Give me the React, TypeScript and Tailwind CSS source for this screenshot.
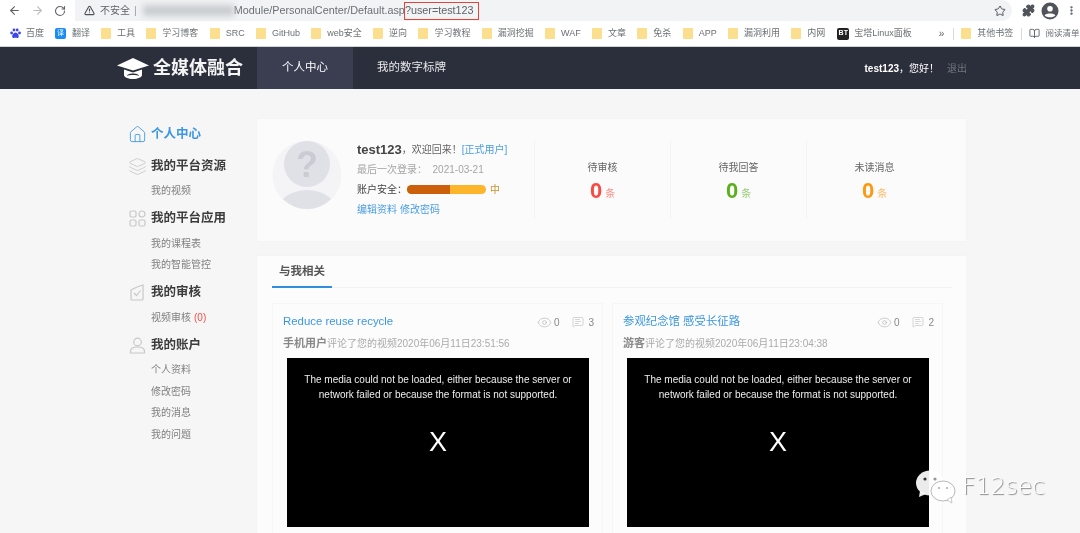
import { ArrowLeft, ArrowRight, RotateCw, TriangleAlert, Star, Puzzle, EllipsisVertical, Home, Layers, Eye, MessageSquareText, BookOpen } from 'lucide-react';

const font = "font-['Liberation_Sans','Noto_Sans_CJK_SC',sans-serif]";

const leftMarks = ['工具', '学习博客', 'SRC', 'GitHub', 'web安全', '逆向', '学习教程', '漏洞挖掘', 'WAF', '文章', '免杀', 'APP', '漏洞利用', '内网'];

function GridIcon() {
  return (
    <svg width="17" height="17" viewBox="0 0 17 17" fill="none" stroke="#c8c8c8" strokeWidth="1.2">
      <rect x="1" y="1" width="6" height="6" rx="1.5" />
      <circle cx="13" cy="4" r="3" />
      <rect x="1" y="10" width="6" height="6" rx="1.5" />
      <rect x="10" y="10" width="6" height="6" rx="1.5" />
    </svg>
  );
}

function ReviewIcon() {
  return (
    <svg width="17" height="17" viewBox="0 0 17 17" fill="none" stroke="#c8c8c8" strokeWidth="1.2">
      <path d="M2 6 L8 3 L14 1 V15 a1 1 0 0 1 -1 1 H3 a1 1 0 0 1 -1 -1 Z" />
      <path d="M5 9 L7.5 11.5 L11.5 6.5" />
    </svg>
  );
}

function AccountIcon() {
  return (
    <svg width="17" height="17" viewBox="0 0 17 17" fill="none" stroke="#c8c8c8" strokeWidth="1.2">
      <circle cx="8.5" cy="5" r="3.8" />
      <path d="M1.5 16 V14.5 C1.5 11.5 4.5 10 8.5 10 C12.5 10 15.5 11.5 15.5 14.5 V16 Z" />
    </svg>
  );
}

function LayersIcon() {
  return <Layers size={19} strokeWidth={1.1} className="-mx-[1px] text-[#c8c8c8]" />;
}

const sideMenu = [
  { title: '我的平台资源', icon: <LayersIcon />, items: ['我的视频'] },
  { title: '我的平台应用', icon: <GridIcon />, items: ['我的课程表', '我的智能管控'] },
  { title: '我的审核', icon: <ReviewIcon />, items: ['视频审核'] },
  { title: '我的账户', icon: <AccountIcon />, items: ['个人资料', '修改密码', '我的消息', '我的问题'] },
];

const stats = [
  { label: '待审核', color: 'text-[#f74c45]', unit: 'text-[#f98f8a]' },
  { label: '待我回答', color: 'text-[#5cb01e]', unit: 'text-[#9acb75]' },
  { label: '未读消息', color: 'text-[#fb9a12]', unit: 'text-[#fbbd6c]' },
];

const feed = [
  { title: 'Reduce reuse recycle', who: '手机用户', time: '2020年06月11日23:51:56', comments: 3 },
  { title: '参观纪念馆 感受长征路', who: '游客', time: '2020年06月11日23:04:38', comments: 2 },
];

function Folder() {
  return <span className="h-[11px] w-[10px] shrink-0 rounded-[1px] bg-[#fbdf8e]" />;
}

function Mark({ label }: { label: string }) {
  return (
    <div className="flex shrink-0 items-center gap-[6px]">
      <Folder />
      <span className="text-[9px] whitespace-nowrap text-[#6b6f74]">{label}</span>
    </div>
  );
}

function Paw() {
  return (
    <svg width="11" height="11" viewBox="0 0 11 11" fill="#3d46e8" className="shrink-0">
      <circle cx="1.6" cy="5" r="1.4" />
      <circle cx="4" cy="2" r="1.4" />
      <circle cx="7.2" cy="2" r="1.4" />
      <circle cx="9.5" cy="5" r="1.4" />
      <path d="M5.5 4.5 C7.5 4.5 9.5 7.5 8.5 9.5 C7.5 10.5 6.5 9.8 5.5 9.8 C4.5 9.8 3.5 10.5 2.5 9.5 C1.5 7.5 3.5 4.5 5.5 4.5 Z" />
    </svg>
  );
}

function Profile16() {
  return (
    <svg width="18" height="18" viewBox="0 0 18 18" className="shrink-0">
      <circle cx="9" cy="9" r="8.5" fill="#50545a" />
      <circle cx="9" cy="6.8" r="2.8" fill="#fff" />
      <path d="M3.6 13.2 C5 10.8 13 10.8 14.4 13.2 C12.5 16 5.5 16 3.6 13.2 Z" fill="#fff" />
    </svg>
  );
}

function BrowserBar() {
  return (
    <div className="bg-white">
      <div className="flex h-[21px] items-center">
        <div className="flex w-[75px] items-center gap-[10px] pl-[8px] text-[#5f6368]">
          <ArrowLeft size={13} strokeWidth={2} />
          <ArrowRight size={13} strokeWidth={2} className="text-[#b9bcc0]" />
          <RotateCw size={12} strokeWidth={2.2} />
        </div>
        <div className="flex h-[21px] w-[937px] items-center rounded-r-full bg-[#f1f3f4] pl-[9px] text-[10.8px] text-[#5f6368]">
          <TriangleAlert size={11} strokeWidth={2.4} className="mr-[5px] text-[#50545a]" />
          <span className="text-[10px]">不安全</span>
          <span className="ml-[4px] text-[#9aa0a6]">|</span>
          <span className="ml-[6px] h-[11px] w-[91px] bg-[#c9cccf] blur-[3px]" />
          <span className="-mr-[1px] text-[#6b6f74]">Module/PersonalCenter/Default.asp</span>
          <span className="flex h-[18px] items-center border-[1.5px] border-[#e8403a] pr-[4px] text-[#5f6368]">
            ?user=test123
          </span>
          <Star size={12} strokeWidth={2} className="mr-[6px] ml-auto text-[#50545a]" />
        </div>
        <div className="flex flex-1 items-center gap-[6px] pl-[10px] text-[#50545a]">
          <Puzzle size={13} fill="currentColor" />
          <Profile16 />
          <EllipsisVertical size={11} strokeWidth={3} className="ml-[1px]" />
        </div>
      </div>
      <div className="flex h-[26px] items-center overflow-hidden border-b border-[#d2d3d5] pl-[10px]">
        <div className="flex shrink-0 items-center gap-[5px]">
          <Paw />
          <span className="text-[9px] whitespace-nowrap text-[#6b6f74]">百度</span>
        </div>
        <div className="ml-[11px] flex shrink-0 items-center gap-[6px]">
          <span className="flex h-[11px] w-[11px] items-center justify-center rounded-[2px] bg-[#1a8cf5] text-[7px] text-white">译</span>
          <span className="text-[9px] whitespace-nowrap text-[#6b6f74]">翻译</span>
        </div>
        <div className="ml-[11px] flex shrink-0 gap-[11.3px]">
          {leftMarks.map((m) => (
            <Mark key={m} label={m} />
          ))}
        </div>
        <div className="ml-[12px] flex shrink-0 items-center gap-[5px]">
          <span className="flex h-[12px] w-[12px] items-center justify-center rounded-[2px] bg-[#222] text-[7px] font-bold text-white">BT</span>
          <span className="text-[9px] whitespace-nowrap text-[#6b6f74]">宝塔Linux面板</span>
        </div>
        <span className="ml-[27px] shrink-0 text-[10px] text-[#5f6368]">»</span>
        <span className="ml-[9px] h-[12px] w-px shrink-0 bg-[#d8d9db]" />
        <div className="ml-[7px]">
          <Mark label="其他书签" />
        </div>
        <span className="ml-[8px] h-[12px] w-px shrink-0 bg-[#d8d9db]" />
        <div className="ml-[7px] flex shrink-0 items-center gap-[5px]">
          <BookOpen size={11} className="text-[#5f6368]" />
          <span className="text-[8.5px] whitespace-nowrap text-[#6b6f74]">阅读清单</span>
        </div>
      </div>
    </div>
  );
}

function LogoCap() {
  return (
    <svg width="32" height="21" viewBox="0 0 32 21" fill="#fff" className="shrink-0">
      <path d="M16 0 L32 7.5 L16 12.5 L0 7.5 Z" />
      <path d="M7 11.5 L16 14.5 L25 11.5 V17 C25 19 21 21 16 21 C11 21 7 19 7 17 Z" />
      <path d="M10 18 C10 14.5 22 14.5 22 18 C20 16.8 12 16.8 10 18 Z" fill="#2b2f3b" />
    </svg>
  );
}

function TopNav() {
  return (
    <div className="flex h-[42px] items-stretch bg-[#2b2f3b] pl-[117px]">
      <div className="flex w-[140px] items-center gap-[4px]">
        <LogoCap />
        <span className="text-[18px] leading-none font-bold whitespace-nowrap text-[#f4f4f4]">全媒体融合</span>
      </div>
      <div className="flex w-[96px] items-center justify-center bg-[#3a3e50] text-[11.5px] text-white">个人中心</div>
      <div className="ml-[24px] flex items-center text-[11.5px] text-[#e8e8ea]">我的数字标牌</div>
      <div className="ml-auto flex items-center pr-[113px] text-[10px] text-white">
        <span className="font-bold">test123</span>
        <span>，您好！</span>
        <span className="ml-[8px] text-[#70737c]">退出</span>
      </div>
    </div>
  );
}

function Sidebar() {
  return (
    <div className="w-[128px] shrink-0 pt-[1px] pl-[1px]">
      <div className="flex h-[29px] items-center gap-[4px]">
        <Home size={19} strokeWidth={1.1} className="-ml-[1px] text-[#3b97e3]" />
        <span className="text-[12.5px] font-bold text-[#3b97e3]">个人中心</span>
      </div>
      {sideMenu.map((s) => (
        <div key={s.title} className="mt-[7px]">
          <div className="flex h-[20px] items-center gap-[5px]">
            {s.icon}
            <span className="text-[12.5px] font-bold whitespace-nowrap text-[#3c3c3c]">{s.title}</span>
          </div>
          <div className="mt-[4px] pl-[22px]">
            {s.items.map((i) => (
              <div key={i} className="flex h-[21.5px] items-center text-[10px] text-[#808080]">
                {i}
                {i === '视频审核' && <span className="ml-[3px] text-[#f74c45]">(0)</span>}
              </div>
            ))}
          </div>
        </div>
      ))}
    </div>
  );
}

function Avatar() {
  return (
    <svg width="70" height="70" viewBox="0 0 70 70" className="shrink-0">
      <defs>
        <clipPath id="round">
          <circle cx="35" cy="35" r="34" />
        </clipPath>
      </defs>
      <circle cx="35" cy="35" r="34.5" fill="#f4f4f6" />
      <circle cx="35" cy="24" r="23" fill="#e0e1e7" />
      <ellipse cx="35" cy="72" rx="30" ry="22" fill="#e0e1e7" clipPath="url(#round)" />
      <text x="35" y="37" textAnchor="middle" fontSize="36" fontWeight="700" fill="#cbccd3" fontFamily="Liberation Sans">?</text>
    </svg>
  );
}

function Profile() {
  return (
    <div className="flex h-[122px] items-start bg-[#fbfbfb] pt-[21px] pl-[15px] outline outline-[#f4f4f4]">
      <Avatar />
      <div className="ml-[15px] w-[177px] shrink-0">
        <div className="flex h-[19px] items-center text-[10px] whitespace-nowrap text-[#666]">
          <span className="text-[13px] font-bold text-[#444]">test123</span>
          <span>，欢迎回来！</span>
          <span className="text-[#4a9de5]">[正式用户]</span>
        </div>
        <div className="flex h-[20px] items-center text-[10px] whitespace-nowrap text-[#a5a5a5]">
          最后一次登录：&nbsp;&nbsp;2021-03-21
        </div>
        <div className="flex h-[20px] items-center text-[10px] text-[#444]">
          账户安全：
          <span className="flex h-[9px] w-[79px] overflow-hidden rounded-full bg-[#fdb52b]">
            <span className="w-[43px] bg-[#cb5f0c]" />
          </span>
          <span className="ml-[4px] text-[#c4932f]">中</span>
        </div>
        <div className="flex h-[20px] items-center gap-[3px] text-[10px] text-[#4a9de5]">
          <span>编辑资料</span>
          <span>修改密码</span>
        </div>
      </div>
      {stats.map((s) => (
        <div key={s.label} className="flex h-[79px] w-[136px] flex-col items-center border-l border-[#f3f3f3] pt-[20px]">
          <div className="text-[10px] text-[#666]">{s.label}</div>
          <div className="mt-[3px] flex items-end gap-[3px]">
            <span className={`text-[22px] leading-[25px] font-bold ${s.color}`}>0</span>
            <span className={`text-[10px] leading-[18px] ${s.unit}`}>条</span>
          </div>
        </div>
      ))}
    </div>
  );
}

function FeedCard({ item }: { item: (typeof feed)[number] }) {
  return (
    <div className="h-[240px] w-[331px] shrink-0 border border-[#f6f6f6] bg-[#fcfcfc] pt-[9px] pl-[10px]">
      <div className="flex h-[18px] items-center pr-[8px]">
        <span className="text-[11.4px] text-[#3b97e3]">{item.title}</span>
        <span className="ml-auto flex items-center text-[10px] text-[#888]">
          <Eye size={15} strokeWidth={1.1} className="mr-[2px] text-[#b5b5b5]" />0
          <MessageSquareText size={12} strokeWidth={1.1} className="mr-[4px] ml-[13px] text-[#b5b5b5]" />
          {item.comments}
        </span>
      </div>
      <div className="mt-[5px] flex h-[15px] items-center text-[10px] whitespace-nowrap text-[#aaa]">
        <span className="text-[11px] font-bold text-[#888]">{item.who}</span>评论了您的视频{item.time}
      </div>
      <div className="mt-[7px] ml-[4px] flex h-[169px] w-[302px] flex-col items-center bg-black pt-[14px] text-center text-[10px] leading-[15px] text-[#eee]">
        <div>The media could not be loaded, either because the server or</div>
        <div>network failed or because the format is not supported.</div>
        <div className="mt-[24px] text-[27px] leading-[32px] text-white">X</div>
      </div>
    </div>
  );
}

function Related() {
  return (
    <div className="mt-[15px] h-[300px] bg-[#fcfcfc] pl-[15px] outline outline-[#f4f4f4]">
      <div className="mr-[14px] h-[32px] border-b-[1px] border-[#f2f2f2]">
        <div className="flex h-[32px] w-[60px] items-center justify-center border-b-2 border-[#2f8fdc] pt-[1px] text-[11.5px] font-bold text-[#555]">
          与我相关
        </div>
      </div>
      <div className="mt-[15px] flex gap-[9px]">
        {feed.map((f) => (
          <FeedCard key={f.title} item={f} />
        ))}
      </div>
    </div>
  );
}

function Watermark() {
  return (
    <div className="absolute top-[469px] left-[915px] flex items-center">
      <svg width="42" height="36" viewBox="0 0 42 36">
        <ellipse cx="15" cy="14" rx="14" ry="12.5" fill="#fff" fillOpacity="0.92" />
        <path d="M5 22 L4 28 L11 25 Z" fill="#fff" fillOpacity="0.92" />
        <circle cx="10" cy="10" r="1.6" fill="#333" />
        <circle cx="20" cy="10" r="1.6" fill="#999" />
        <ellipse cx="28" cy="22" rx="12" ry="10" fill="#fff" stroke="#999" strokeWidth="0.7" />
        <path d="M32 31 L37 34 L36 28 Z" fill="#fff" stroke="#999" strokeWidth="0.5" />
        <circle cx="24" cy="19" r="1" fill="#aaa" />
        <circle cx="32" cy="19" r="1" fill="#aaa" />
      </svg>
      <span className="ml-[5px] font-['DejaVu_Sans',sans-serif] text-[23.5px] leading-none font-light text-white [text-shadow:1px_1px_1px_#888]">
        F12sec
      </span>
    </div>
  );
}

export default function App() {
  return (
    <div className={`relative h-[533px] w-[1080px] overflow-hidden bg-[#f6f6f6] blur-[0.5px] ${font}`}>
      <BrowserBar />
      <TopNav />
      <div className="flex pt-[30px] pl-[128px]">
        <Sidebar />
        <div className="ml-[1px] w-[709px]">
          <Profile />
          <Related />
        </div>
      </div>
      <Watermark />
    </div>
  );
}
